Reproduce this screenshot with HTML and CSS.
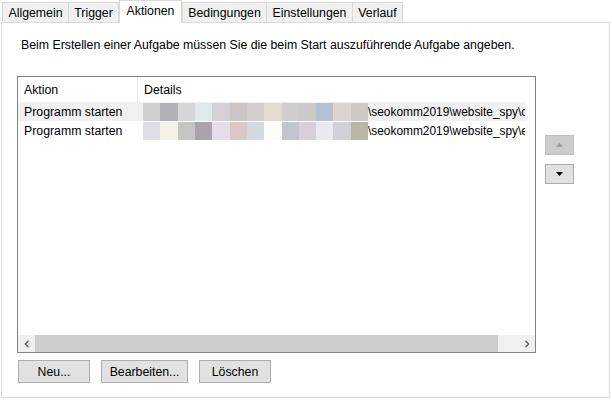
FILE: index.html
```html
<!DOCTYPE html>
<html lang="de">
<head>
<meta charset="utf-8">
<link rel="stylesheet" href="styles.css">
</head>
<body>
<div class="tabs">
  <div class="tab t1">Allgemein</div>
  <div class="tab t2">Trigger</div>
  <div class="tab active t3">Aktionen</div>
  <div class="tab t4">Bedingungen</div>
  <div class="tab t5">Einstellungen</div>
  <div class="tab t6">Verlauf</div>
</div>
<div class="panel">
  <p class="intro">Beim Erstellen einer Aufgabe müssen Sie die beim Start auszuführende Aufgabe angeben.</p>
  <div class="main">
    <div class="list">
      <div class="head">
        <div class="col c1">Aktion</div>
        <div class="col c2">Details</div>
      </div>
      <div class="row sel">
        <div class="col c1">Programm starten</div>
        <div class="col c2">
          <div class="blur">
            <i style="background:#d0d0d2"></i><i style="background:#b4b0b8"></i><i style="background:#d6d6d8"></i><i style="background:#dfe9ea"></i><i style="background:#d3d1d6"></i><i style="background:#cdc4c6"></i><i style="background:#d3cfcf"></i><i style="background:#e0dcd2"></i><i style="background:#cfcdcd"></i><i style="background:#ccc9c9"></i><i style="background:#b8c0cf"></i><i style="background:#dbd3d2"></i><i style="background:#ccc8c2"></i>
          </div>
          <span class="path">\seokomm2019\website_spy\cr</span>
        </div>
      </div>
      <div class="row">
        <div class="col c1">Programm starten</div>
        <div class="col c2">
          <div class="blur">
            <i style="background:#e0dde7"></i><i style="background:#f4f1e6"></i><i style="background:#c6c4c4"></i><i style="background:#aba3ab"></i><i style="background:#e3deea"></i><i style="background:#d9c8c4"></i><i style="background:#d4d8e0"></i><i style="background:#fafcf6"></i><i style="background:#c2c6cc"></i><i style="background:#d8d0d8"></i><i style="background:#e8eaf0"></i><i style="background:#d0d0d6"></i><i style="background:#b8b4a8"></i>
          </div>
          <span class="path">\seokomm2019\website_spy\e</span>
        </div>
      </div>
      <div class="fill"></div>
      <div class="hscroll">
        <div class="arrow">
          <svg width="8" height="8" viewBox="0 0 8 8"><path d="M5.5 0.8 L2.5 4 L5.5 7.2" fill="none" stroke="#606060" stroke-width="1.5"/></svg>
        </div>
        <div class="thumb"></div>
        <div class="track"></div>
        <div class="arrow">
          <svg width="8" height="8" viewBox="0 0 8 8"><path d="M2.5 0.8 L5.5 4 L2.5 7.2" fill="none" stroke="#606060" stroke-width="1.5"/></svg>
        </div>
      </div>
    </div>
    <div class="side">
      <div class="sbtn up">
        <svg width="7" height="4" viewBox="0 0 7 4"><path d="M0 4 L3.5 0 L7 4 Z" fill="#9a9a9a"/></svg>
      </div>
      <div class="sbtn down">
        <svg width="7" height="4" viewBox="0 0 7 4"><path d="M0 0 L3.5 4 L7 0 Z" fill="#000"/></svg>
      </div>
    </div>
  </div>
  <div class="buttons">
    <div class="btn b1">Neu...</div>
    <div class="btn b2">Bearbeiten...</div>
    <div class="btn b3">Löschen</div>
  </div>
</div>
</body>
</html>
```
FILE: styles.css
```css
html, body {
  margin: 0;
  padding: 0;
  background: #ffffff;
}
body {
  width: 612px;
  height: 400px;
  overflow: hidden;
  font-family: "Liberation Sans", Arial, sans-serif;
  font-size: 12.3px;
  color: #000;
}
.tabs {
  display: flex;
  align-items: flex-end;
  height: 22px;
  padding-left: 2px;
}
.tab {
  box-sizing: border-box;
  height: 20px;
  background: #f0f0f0;
  border: 1px solid #d9d9d9;
  border-bottom: none;
  margin-left: -1px;
  display: flex;
  align-items: center;
  justify-content: center;
  line-height: 1;
  padding-top: 1px;
}
.tab.t1 { margin-left: 0; width: 67px; }
.tab.t2 { width: 51px; }
.tab.active {
  width: 63px;
  height: 23px;
  background: #fff;
  margin-bottom: -1px;
  margin-left: 0;
  margin-right: 0;
  position: relative;
  z-index: 1;
  padding-bottom: 3px;
}
.tab.t4 { width: 85px; margin-left: 0; }
.tab.t5 { width: 87px; }
.tab.t6 { width: 51px; }
.panel {
  box-sizing: border-box;
  margin-left: 1px;
  width: 609px;
  height: 376px;
  border: 1px solid #d9d9d9;
  background: #fff;
  padding: 15px 0 0 15px;
}
.intro {
  margin: 0 0 0 4px;
  height: 15px;
  line-height: 15px;
  white-space: nowrap;
}
.main {
  display: flex;
  margin-top: 23px;
  height: 277px;
}
.list {
  box-sizing: border-box;
  width: 519px;
  height: 277px;
  border: 1px solid #828282;
  display: flex;
  flex-direction: column;
  overflow: hidden;
}
.head, .row {
  display: flex;
  white-space: nowrap;
}
.head {
  height: 25px;
  align-items: center;
}
.head .c1 {
  border-right: 1px solid #e5e5e5;
  height: 25px;
  display: flex;
  align-items: center;
}
.col.c1 {
  box-sizing: border-box;
  width: 120px;
  padding-left: 6px;
  flex: none;
}
.col.c2 {
  padding-left: 6px;
  display: flex;
  align-items: center;
  overflow: hidden;
  width: 382px;
  flex: none;
}
.row {
  height: 19px;
  align-items: center;
}
.row.sel {
  background: #f0f0f0;
  width: 508px;
}
.row .c2 { padding-left: 5px; }
.blur {
  display: flex;
  width: 225px;
  height: 18px;
  flex: none;
}
.blur i {
  flex: 1;
  height: 18px;
}
.path {
  white-space: nowrap;
  font-size: 11.9px;
}
.fill { flex: 1; }
.hscroll {
  display: flex;
  height: 17px;
  background: #f0f0f0;
}
.arrow {
  width: 17px;
  height: 17px;
  display: flex;
  align-items: center;
  justify-content: center;
  flex: none;
}
.thumb {
  width: 463px;
  background: #cdcdcd;
  flex: none;
}
.track { flex: 1; }
.side {
  display: flex;
  flex-direction: column;
  gap: 9px;
  margin-left: 9px;
  padding-top: 59px;
}
.sbtn {
  box-sizing: border-box;
  width: 29px;
  height: 20px;
  display: flex;
  align-items: center;
  justify-content: center;
}
.sbtn.up {
  background: #cccccc;
  border: 1px solid #bfbfbf;
}
.sbtn.down {
  background: #e1e1e1;
  border: 1px solid #adadad;
}
.buttons {
  display: flex;
  gap: 11px;
  margin-top: 7px;
  margin-left: 1px;
}
.btn {
  box-sizing: border-box;
  height: 23px;
  background: #e1e1e1;
  border: 1px solid #adadad;
  display: flex;
  align-items: center;
  justify-content: center;
}
.btn.b1 { width: 72px; }
.btn.b2 { width: 87px; }
.btn.b3 { width: 72px; }
```
